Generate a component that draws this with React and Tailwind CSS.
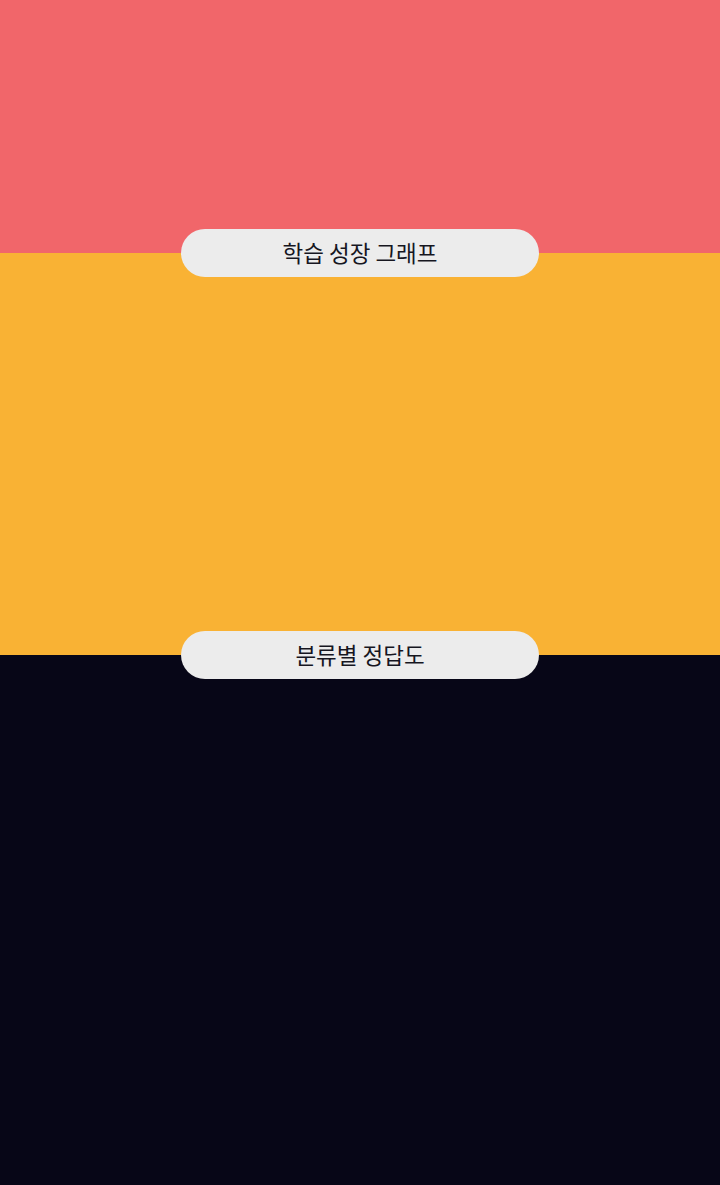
export default function App() {
  const pill =
    "absolute left-1/2 top-0 -translate-x-1/2 -translate-y-1/2 w-[358px] h-[48px] rounded-full bg-[#ececec] flex items-center justify-center text-[22.5px] text-[#16161f]";
  const font = { fontFamily: '"Noto Sans CJK KR", "Noto Sans", sans-serif' };
  return (
    <div className="w-[720px] h-[1185px] flex flex-col" style={font}>
      <div className="h-[253px] bg-[#f1666a]" />
      <div className="relative h-[402px] bg-[#f9b234]">
        <div className={pill}>학습 성장 그래프</div>
      </div>
      <div className="relative flex-1 bg-[#070617]">
        <div className={pill}>분류별 정답도</div>
      </div>
    </div>
  );
}
